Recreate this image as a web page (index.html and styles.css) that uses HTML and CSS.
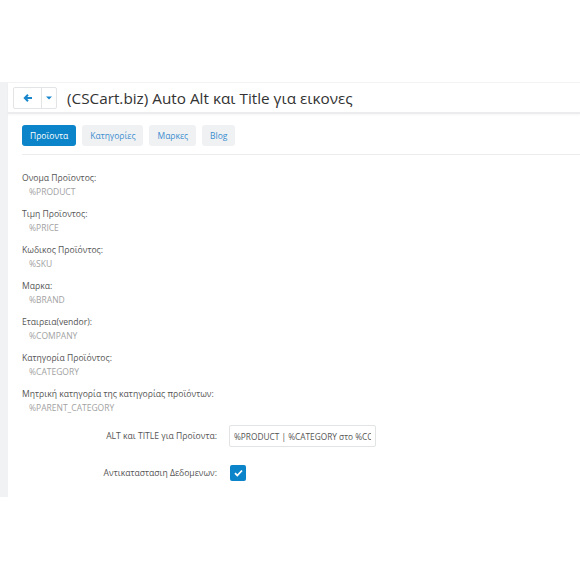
FILE: index.html
```html
<!DOCTYPE html>
<html>
<head>
<meta charset="utf-8">
<link rel="stylesheet" href="styles.css">
</head>
<body>
<div class="top"></div>
<div class="main">
  <div class="side"></div>
  <div class="content">
    <div class="header">
      <div class="btn-group">
        <span class="btn back">
          <svg width="10" height="10" viewBox="0 0 10 10"><path d="M9 5H2.5M5 1.8L1.8 5 5 8.2" fill="none" stroke="#1a86cc" stroke-width="2"/></svg>
        </span>
        <span class="btn caret">
          <svg width="6" height="4" viewBox="0 0 6 4"><path d="M0 0.5h6L3 3.5z" fill="#1a86cc"/></svg>
        </span>
      </div>
      <h1 class="title">(CSCart.biz) Auto Alt και Title για εικονες</h1>
    </div>
    <div class="body">
      <div class="tabs">
        <span class="tab active">Προϊοντα</span>
        <span class="tab">Κατηγορίες</span>
        <span class="tab">Μαρκες</span>
        <span class="tab">Blog</span>
      </div>
      <div class="fields">
        <div class="field"><div class="label">Ονομα Προϊοντος:</div><div class="value">%PRODUCT</div></div>
        <div class="field"><div class="label">Τιμη Προϊοντος:</div><div class="value">%PRICE</div></div>
        <div class="field"><div class="label">Κωδικος Προϊόντος:</div><div class="value">%SKU</div></div>
        <div class="field"><div class="label">Μαρκα:</div><div class="value">%BRAND</div></div>
        <div class="field"><div class="label">Εταιρεια(vendor):</div><div class="value">%COMPANY</div></div>
        <div class="field"><div class="label">Κατηγορία Προϊόντος:</div><div class="value">%CATEGORY</div></div>
        <div class="field"><div class="label">Μητρική κατηγορία της κατηγορίας προϊόντων:</div><div class="value">%PARENT_CATEGORY</div></div>
      </div>
      <div class="form-row first">
        <label class="form-label">ALT και TITLE για Προϊοντα:</label>
        <input class="input" type="text" value="%PRODUCT | %CATEGORY στο %COMPANY">
      </div>
      <div class="form-row">
        <label class="form-label">Αντικαταστασιη Δεδομενων:</label>
        <span class="checkbox">
          <svg width="9" height="8" viewBox="0 0 9 8"><path d="M1 4.2l2.3 2.3L8 1.5" fill="none" stroke="#fff" stroke-width="1.8"/></svg>
        </span>
      </div>
    </div>
  </div>
</div>
</body>
</html>
```
FILE: styles.css
```css
html, body {
  margin: 0;
  padding: 0;
  background: #fff;
  font-family: "Open Sans", "Noto Sans", sans-serif;
}
.top {
  height: 82px;
}
.main {
  display: flex;
  height: 415px;
  overflow: hidden;
}
.side {
  width: 8px;
  flex: none;
  background: #f1f2f4;
}
.content {
  flex: 1;
  background: #fff;
  border-top: 1px solid #f3f3f5;
}
.header {
  display: flex;
  align-items: center;
  height: 29px;
  padding: 0 0 0 5px;
  border-bottom: 2px solid #ececee;
  box-shadow: 0 1px 2px rgba(0,0,0,0.04);
}
.btn-group {
  display: flex;
  height: 20px;
  border: 1px solid #e3e4e6;
  border-radius: 2px;
  background: #fff;
}
.btn {
  display: flex;
  align-items: center;
  justify-content: center;
}
.back {
  width: 27px;
  border-right: 1px solid #e3e4e6;
}
.caret {
  width: 14px;
}
.title {
  margin: 0 0 0 10px;
  font-size: 15.3px;
  font-weight: 400;
  color: #333;
}
.body {
  padding: 11px 0 0 14px;
}
.tabs {
  display: flex;
  gap: 6px;
  padding-bottom: 8px;
  border-bottom: 1px solid #ececee;
}
.tab {
  display: flex;
  align-items: center;
  height: 21px;
  padding: 0 8px;
  border-radius: 3px;
  background: #f0f1f3;
  color: #3b8ed0;
  font-size: 8.5px;
}
.tab.active {
  background: #0b84c9;
  color: #fff;
}
.fields {
  padding-top: 16px;
}
.field {
  height: 36px;
}
.label {
  font-size: 8.6px;
  color: #555;
  line-height: 14px;
}
.value {
  font-size: 8.5px;
  color: #a2a2a2;
  line-height: 14px;
  padding-left: 7px;
}
.form-row {
  display: flex;
  align-items: center;
  height: 22px;
  margin-bottom: 15px;
}
.form-row.first {
  margin-top: 2px;
}
.form-label {
  width: 207px;
  text-align: right;
  font-size: 8.6px;
  color: #555;
  padding-right: 12px;
  box-sizing: border-box;
  flex: none;
}
.input {
  width: 147px;
  height: 22px;
  margin: 0;
  box-sizing: border-box;
  border: 1px solid #e2e3e5;
  border-radius: 2px;
  font-family: "Open Sans", "Noto Sans", sans-serif;
  font-size: 8.3px;
  color: #555;
  padding: 0 4px;
  background: #fff;
  outline: none;
}
.checkbox {
  width: 16px;
  height: 16px;
  border-radius: 2px;
  background: #0b84c9;
  display: flex;
  align-items: center;
  justify-content: center;
  margin-left: 1px;
}
```
